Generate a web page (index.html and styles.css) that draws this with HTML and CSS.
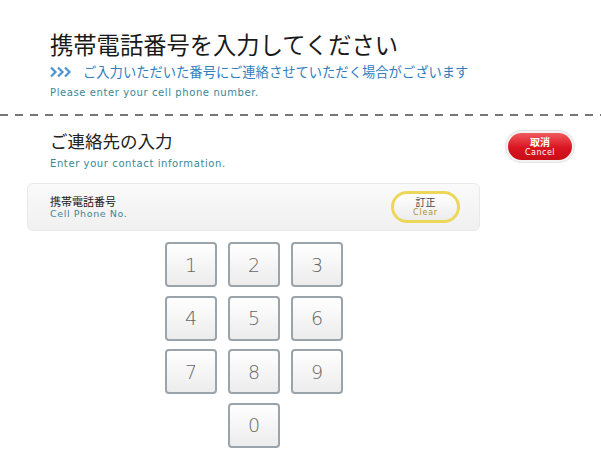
FILE: index.html
```html
<!doctype html>
<html lang="ja">
<head>
    <meta charset="UTF-8">
    <title>携帯電話番号の入力</title>
    <link rel="stylesheet" href="styles.css">
</head>
<body>

    <div class="header">
        <h1>携帯電話番号を入力してください</h1>
        <p class="lead">
            <svg class="arrows" width="22" height="12" viewBox="0 0 22 12">
                <path d="M1 1.5 L5.5 6 L1 10.5 M8 1.5 L12.5 6 L8 10.5 M15 1.5 L19.5 6 L15 10.5" fill="none" stroke="#4a95d2" stroke-width="2.2"/>
            </svg>
            ご入力いただいた番号にご連絡させていただく場合がございます
        </p>
        <p class="en">Please enter your cell phone number.</p>
    </div>
    <div class="dashed"></div>

    <div class="section">
        <div class="title">
            <h2>ご連絡先の入力</h2>
            <p class="en">Enter your contact information.</p>
        </div>
        <button class="cancel-button">取消<span>Cancel</span></button>
    </div>

    <div class="phone-box">
        <div class="label">
            <div class="ja">携帯電話番号</div>
            <div class="en">Cell Phone No.</div>
        </div>
        <button class="clear-button">訂正<span>Clear</span></button>
    </div>

    <div class="keypad">
        <button class="key">1</button>
        <button class="key">2</button>
        <button class="key">3</button>
        <button class="key">4</button>
        <button class="key">5</button>
        <button class="key">6</button>
        <button class="key">7</button>
        <button class="key">8</button>
        <button class="key">9</button>
        <button class="key zero">0</button>
    </div>

</body>
</html>
```

FILE: styles.css
```css
body {
    margin: 0;
    background: #fff;
    font-family: "Noto Sans CJK JP", sans-serif;
    color: #222;
}
h1, h2, p {
    margin: 0;
    font-weight: normal;
}
.header {
    padding: 27px 0 0 50px;
    height: 87px;
}
.header h1 {
    font-size: 23.3px;
    line-height: 34px;
    color: #1a1a1a;
}
.lead {
    display: flex;
    align-items: center;
    gap: 11px;
    margin-top: 1px;
    font-size: 13.3px;
    line-height: 20px;
    color: #2f7dbf;
}
.dashed {
    height: 2px;
    background: repeating-linear-gradient(90deg, #777 0 8px, transparent 8px 15px);
}
.en {
    font-family: "DejaVu Sans", sans-serif;
    font-size: 10px;
    letter-spacing: 0.6px;
    color: #3a8797;
}
.header .en {
    margin-top: 5px;
}
.section {
    display: flex;
    justify-content: space-between;
    align-items: flex-start;
    padding: 12px 29px 0 50px;
}
.section h2 {
    font-size: 17.5px;
    line-height: 26px;
    color: #222;
}
.section .en {
    margin-top: 4px;
}
.cancel-button {
    margin-top: 5px;
    width: 64px;
    height: 27px;
    padding: 0;
    border: none;
    border-radius: 14px;
    background: linear-gradient(#f05a5e, #d9141f 55%, #c70f18);
    box-shadow: 0 0 0 2px #f3f3f3, 0 0 0 3px #e4e4e4;
    color: #fff;
    font-family: "Noto Sans CJK JP", sans-serif;
    font-size: 10px;
    font-weight: bold;
    line-height: 11px;
}
.cancel-button span, .clear-button span {
    display: block;
    font-family: "DejaVu Sans", sans-serif;
    font-size: 8px;
    font-weight: normal;
    letter-spacing: 0.5px;
}
.phone-box {
    display: flex;
    justify-content: space-between;
    align-items: center;
    margin: 14px 0 0 27px;
    width: 453px;
    height: 48px;
    box-sizing: border-box;
    padding: 0 19px 0 22px;
    border: 1px solid #e9e9e9;
    border-radius: 6px;
    background: linear-gradient(#fafafa, #f0f0f0);
}
.label .ja {
    font-size: 11px;
    line-height: 14px;
    color: #222;
}
.label .en {
    font-size: 9.5px;
    line-height: 12px;
}
.clear-button {
    width: 69px;
    height: 32px;
    padding: 0;
    border: 3px solid #ecd75a;
    border-radius: 16px;
    background: linear-gradient(#ffffff, #ececec);
    color: #444;
    font-family: "Noto Sans CJK JP", sans-serif;
    font-size: 10px;
    line-height: 11px;
}
.clear-button span {
    color: #a8922e;
    letter-spacing: 0.8px;
}
.keypad {
    display: grid;
    grid-template-columns: repeat(3, 52px);
    gap: 8.5px 11px;
    margin: 11px 0 0 165px;
}
.key {
    height: 45px;
    padding: 0;
    border: 2px solid #9aa4aa;
    border-radius: 4px;
    background: linear-gradient(#ffffff, #ececec);
    color: #666;
    font-family: "DejaVu Sans", sans-serif;
    font-size: 19px;
    font-weight: 200;
}
.key.zero {
    grid-column: 2;
}
```
